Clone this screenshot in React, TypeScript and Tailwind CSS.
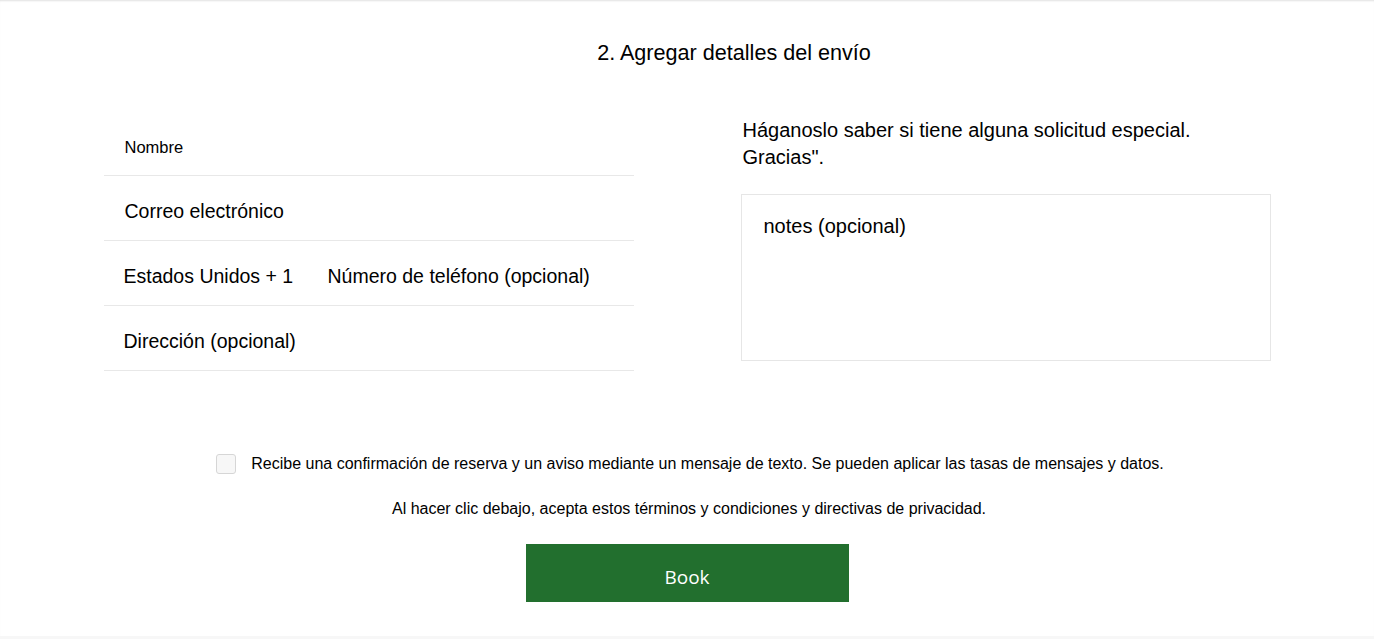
import React from 'react';

const font = { fontFamily: '"Liberation Sans", Arial, sans-serif' };

function Row({ children }: { children: React.ReactNode }) {
  return (
    <div className="h-[65px] border-b border-[#e8e8e8] flex items-center pt-[7px] px-[20px] text-[19.5px] text-black">
      {children}
    </div>
  );
}

export default function App() {
  return (
    <div className="w-full bg-white" style={font}>
      <div className="h-[636px] bg-white shadow-[inset_0_2px_2px_-1px_rgba(0,0,0,0.12)] pt-[39px]">
        <h2 className="text-[21.6px] text-black text-center pl-[94px] leading-[28px]">
          2. Agregar detalles del envío
        </h2>

        <div className="w-[1167px] mx-auto flex justify-between mt-[26px]">
          <div className="w-[530px] pt-[18px]">
            <div className="h-[65px] border-b border-[#e8e8e8] flex items-center pt-[8px] px-[21px] text-[16.5px] text-black">
              Nombre
            </div>
            <Row><span className="pl-px">Correo electrónico</span></Row>
            <Row>
              <span className="w-[204px]">Estados Unidos + 1</span>
              <span>Número de teléfono (opcional)</span>
            </Row>
            <Row>Dirección (opcional)</Row>
          </div>

          <div className="w-[530px]">
            <p className="text-[20px] leading-[27px] text-black pl-[2px] pt-[24px]">
              Háganoslo saber si tiene alguna solicitud especial.
              <br />
              Gracias".
            </p>
            <div className="mt-[23px] h-[167px] border border-[#e6e6e6] px-[22px] pt-[16px] text-[20px] text-black">
              notes (opcional)
            </div>
          </div>
        </div>

        <div className="mt-[81px] flex items-center justify-center gap-[15px] pl-[6px]">
          <span className="w-[20px] h-[20px] rounded-[3px] border border-[#d6d6d6] bg-[#f7f7f7]" />
          <span className="text-[16px] text-black">
            Recibe una confirmación de reserva y un aviso mediante un mensaje de texto. Se pueden aplicar las tasas de mensajes y datos.
          </span>
        </div>

        <p className="mt-[21px] text-center text-[16px] text-black pl-[4px]">
          Al hacer clic debajo, acepta estos términos y condiciones y directivas de privacidad.
        </p>

        <div className="flex justify-center mt-[23px]">
          <button
            className="w-[323px] h-[58px] bg-[#226f2e] text-white text-[19px] pt-[8px]"
            style={{ fontFamily: '"Open Sans", "Noto Sans", sans-serif' }}
          >
            Book
          </button>
        </div>
      </div>
      <div className="h-[3px] bg-[#f7f7f7]" />
    </div>
  );
}
